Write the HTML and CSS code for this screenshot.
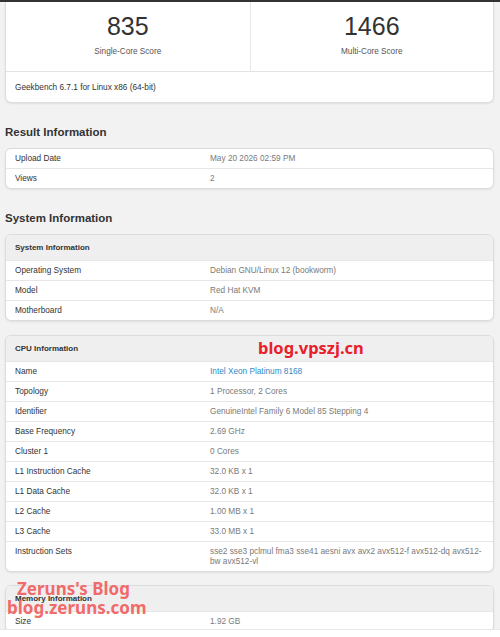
FILE: index.html
```html
<!DOCTYPE html>
<html lang="en">
<head>
    <meta charset="UTF-8">
    <meta name="viewport" content="width=device-width, initial-scale=1.0">
    <title>Geekbench Result</title>
    <link rel="stylesheet" href="styles.css">
</head>
<body>
    <div class="topbar"></div>

    <div class="page">
        <div class="score-card">
            <div class="scores">
                <div class="score">
                    <div class="score-value">835</div>
                    <div class="score-name">Single-Core Score</div>
                </div>
                <div class="score">
                    <div class="score-value">1466</div>
                    <div class="score-name">Multi-Core Score</div>
                </div>
            </div>
            <div class="score-footer">Geekbench 6.7.1 for Linux x86 (64-bit)</div>
        </div>

        <h2 class="section-title">Result Information</h2>
        <div class="info-card">
            <div class="info-row"><div class="label">Upload Date</div><div class="value">May 20 2026 02:59 PM</div></div>
            <div class="info-row"><div class="label">Views</div><div class="value">2</div></div>
        </div>

        <h2 class="section-title">System Information</h2>
        <div class="info-card">
            <div class="info-head">System Information</div>
            <div class="info-row"><div class="label">Operating System</div><div class="value">Debian GNU/Linux 12 (bookworm)</div></div>
            <div class="info-row"><div class="label">Model</div><div class="value">Red Hat KVM</div></div>
            <div class="info-row"><div class="label">Motherboard</div><div class="value">N/A</div></div>
        </div>

        <div class="info-card">
            <div class="info-head">CPU Information</div>
            <div class="info-row"><div class="label">Name</div><div class="value"><a class="link" href="#">Intel Xeon Platinum 8168</a></div></div>
            <div class="info-row"><div class="label">Topology</div><div class="value">1 Processor, 2 Cores</div></div>
            <div class="info-row"><div class="label">Identifier</div><div class="value">GenuineIntel Family 6 Model 85 Stepping 4</div></div>
            <div class="info-row"><div class="label">Base Frequency</div><div class="value">2.69 GHz</div></div>
            <div class="info-row"><div class="label">Cluster 1</div><div class="value">0 Cores</div></div>
            <div class="info-row"><div class="label">L1 Instruction Cache</div><div class="value">32.0 KB x 1</div></div>
            <div class="info-row"><div class="label">L1 Data Cache</div><div class="value">32.0 KB x 1</div></div>
            <div class="info-row"><div class="label">L2 Cache</div><div class="value">1.00 MB x 1</div></div>
            <div class="info-row"><div class="label">L3 Cache</div><div class="value">33.0 MB x 1</div></div>
            <div class="info-row"><div class="label">Instruction Sets</div><div class="value">sse2 sse3 pclmul fma3 sse41 aesni avx avx2 avx512-f avx512-dq avx512-bw avx512-vl</div></div>
        </div>

        <div class="info-card">
            <div class="info-head">Memory Information</div>
            <div class="info-row"><div class="label">Size</div><div class="value">1.92 GB</div></div>
        </div>

        <!-- site stamps -->
        <div class="stamp stamp-vpszj">blog.vpszj.cn</div>
        <div class="stamp stamp-zeruns">
            <div class="stamp-line-1">Zeruns's Blog</div>
            <div>blog.zeruns.com</div>
        </div>
    </div>

    <div class="bottom-strip"></div>
</body>
</html>
```

FILE: styles.css
```css
body {
    margin: 0;
    background: #f2f2f2;
    font-family: "Liberation Sans", Arial, sans-serif;
    color: #333;
}

.topbar {
    height: 2px;
    background: #333;
}

.page {
    position: relative;
    padding: 0 6px 20px 5px;
}

/* score summary */
.score-card {
    background: #fff;
    border: 1px solid #dcdcdc;
    border-top: none;
    border-radius: 0 0 6px 6px;
    box-shadow: 0 1px 2px rgba(0, 0, 0, 0.08);
    margin-bottom: 1px;
}

.scores {
    display: grid;
    grid-template-columns: 1fr 1fr;
    border-bottom: 1px solid #e3e3e3;
}

.score {
    text-align: center;
    padding: 11px 0 14px;
}

.score + .score {
    border-left: 1px solid #e6e6e6;
}

.score-value {
    font-size: 25px;
    line-height: 26px;
    color: #333;
}

.score-name {
    margin-top: 8px;
    font-size: 8.2px;
    line-height: 10px;
    color: #555;
}

.score-footer {
    padding: 11px 9px 9px;
    font-size: 8.25px;
    line-height: 10px;
}

.section-title {
    margin: 22px 0 9px;
    font-size: 11.5px;
    line-height: 14px;
    font-weight: bold;
    color: #333;
}

.section-title + .info-card {
    margin-top: 0;
}

/* key / value tables */
.info-card {
    background: #fff;
    border: 1px solid #dcdcdc;
    border-radius: 6px;
    overflow: hidden;
    box-shadow: 0 1px 2px rgba(0, 0, 0, 0.08);
    margin-top: 14px;
}

.info-card + .info-card + .info-card {
    margin-top: 13px;
}

.info-head {
    background: #efefef;
    padding: 7.5px 9px;
    font-size: 8px;
    line-height: 10px;
    font-weight: bold;
}

.info-row {
    display: grid;
    grid-template-columns: 195px 1fr;
    padding: 4.5px 6px 4.5px 9px;
    font-size: 8.25px;
    line-height: 10px;
}

.info-row + .info-row,
.info-head + .info-row {
    border-top: 1px solid #e6e6e6;
}

.label {
    color: #333;
}

.value {
    color: #7a7a7a;
}

.link {
    color: #2e8bc9;
    text-decoration: none;
}

.stamp {
    position: absolute;
    font-family: "Noto Sans", sans-serif;
    font-weight: bold;
    white-space: nowrap;
}

.stamp-vpszj {
    left: 258px;
    top: 335px;
    font-size: 16.5px;
    line-height: 22px;
    color: #e8202a;
}

.stamp-zeruns {
    left: 7px;
    top: 578px;
    font-size: 17px;
    line-height: 18.5px;
    color: rgba(242, 88, 88, 0.9);
}

.stamp-line-1 {
    padding-left: 10px;
}

.bottom-strip {
    position: fixed;
    left: 0;
    right: 0;
    bottom: 0;
    height: 7px;
    background: #fff;
    border-top: 1px solid #e8e8e8;
}
```
